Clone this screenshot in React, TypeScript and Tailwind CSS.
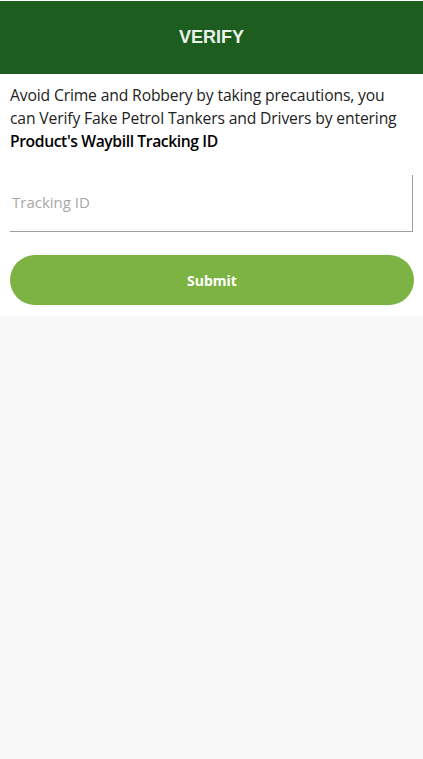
import React from "react";

export default function App() {
  return (
    <div className="min-h-[759px] w-full bg-[#f8f8f8]" style={{ fontFamily: "'Open Sans', 'Noto Sans', sans-serif" }}>
      <div className="bg-white pb-[11px]">
        <div className="mt-[1px] flex h-[73px] items-center justify-center bg-[#1d5e20]">
          <span className="text-[18px] font-bold text-[#eaf3ea]" style={{ fontFamily: "'Liberation Sans', Arial, sans-serif" }}>VERIFY</span>
        </div>
        <div className="px-[10px] pt-[10px]">
          <p className="text-[15.7px] leading-[23px] text-[#222] tracking-[-0.15px] whitespace-nowrap">
            Avoid Crime and Robbery by taking precautions, you
            <br />
            can Verify Fake Petrol Tankers and Drivers by entering
            <br />
            <span className="font-semibold text-black tracking-[-0.4px]">Product's Waybill Tracking ID</span>
          </p>
          <div className="mt-[22px] h-[57px] border-r border-b border-[#9e9e9e]">
            <input
              className="h-full w-full bg-transparent px-[2px] pb-[2px] text-[15px] text-[#333] outline-none placeholder:text-[#a8a8a8]"
              placeholder="Tracking ID"
            />
          </div>
          <button className="mt-[23px] h-[50px] w-[404px] rounded-full bg-[#7cb342] text-[14px] font-bold text-white">
            Submit
          </button>
        </div>
      </div>
    </div>
  );
}
